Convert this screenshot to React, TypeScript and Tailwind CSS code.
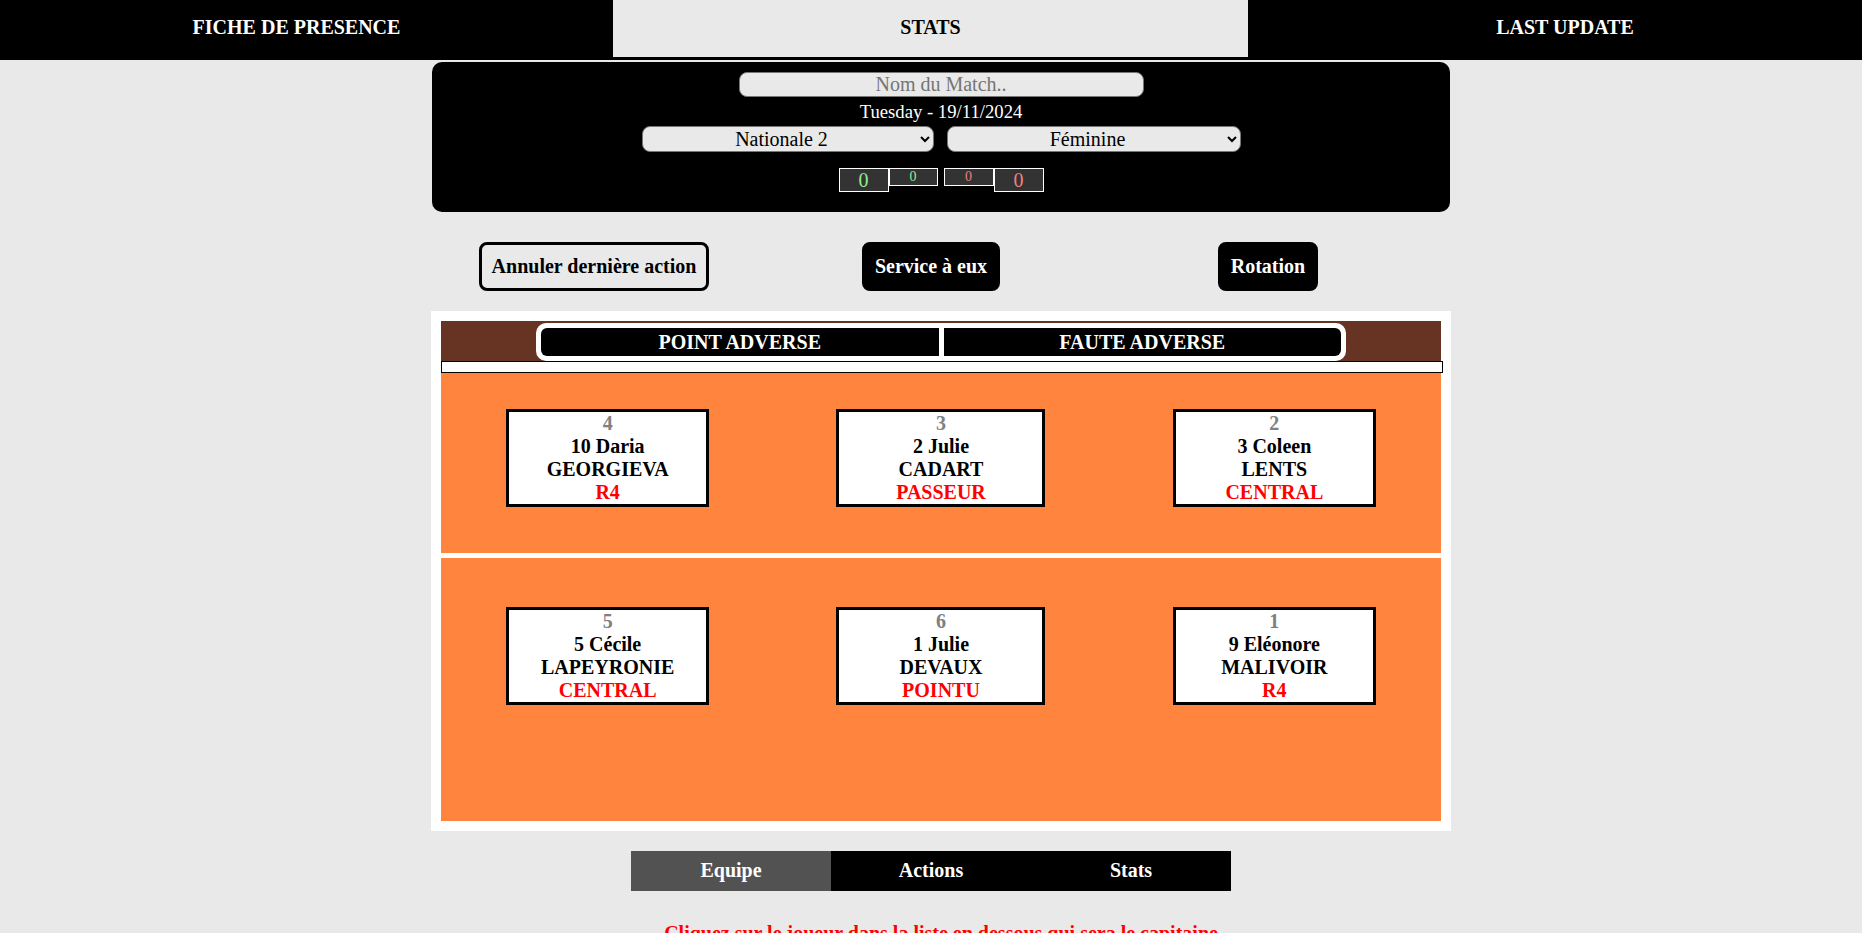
import { useState } from "react"

const front = [
  { pos: "4", name: "10 Daria", last: "GEORGIEVA", role: "R4", w: "w-[203px]" },
  { pos: "3", name: "2 Julie", last: "CADART", role: "PASSEUR", w: "w-[209px]" },
  { pos: "2", name: "3 Coleen", last: "LENTS", role: "CENTRAL", w: "w-[203px]" },
]

const back = [
  { pos: "5", name: "5 Cécile", last: "LAPEYRONIE", role: "CENTRAL", w: "w-[203px]" },
  { pos: "6", name: "1 Julie", last: "DEVAUX", role: "POINTU", w: "w-[209px]" },
  { pos: "1", name: "9 Eléonore", last: "MALIVOIR", role: "R4", w: "w-[203px]" },
]

type Player = (typeof front)[number]

function PlayerCard({ p }: { p: Player }) {
  return (
    <div className={`${p.w} justify-self-center border-[3px] border-black bg-white text-center text-[20px] font-bold leading-[23px]`}>
      <div className="text-[#808080]">{p.pos}</div>
      <div className="text-black">{p.name}</div>
      <div className="text-black">{p.last}</div>
      <div className="text-[#ff0000]">{p.role}</div>
    </div>
  )
}

export default function App() {
  const [tab, setTab] = useState("Equipe")

  return (
    <div className="h-[933px] overflow-hidden bg-[#e9e9e9] font-['Liberation_Serif',serif]">
      {/* Top navigation */}
      <nav className="flex h-[60px] items-start bg-black text-[20px] font-bold leading-[23px]">
        <div className="h-[57px] w-[593px] pt-[16px] text-center text-white">FICHE DE PRESENCE</div>
        <div className="ml-5 h-[57px] w-[635px] bg-[#e9e9e9] pt-[16px] text-center text-black">STATS</div>
        <div className="ml-5 h-[57px] flex-1 pt-[16px] text-center text-white">LAST UPDATE</div>
      </nav>

      <div className="flex flex-col items-center">
        {/* Match panel */}
        <div className="ml-5 mt-[2px] flex w-[1018px] flex-col items-center rounded-[10px] bg-black pb-[20px] pt-[10px]">
          <input
            placeholder="Nom du Match.."
            className="h-[25px] w-[405px] rounded-[8px] border border-[#767676] bg-[#e9e9e9] text-center text-[20px] leading-[23px] text-black outline-none placeholder:text-[#757575]"
          />
          <div className="mt-1 text-[18.7px] leading-[21.5px] text-white">Tuesday - 19/11/2024</div>
          <div className="mt-[3px] flex gap-[13px]">
            <select
              defaultValue="Nationale 2"
              className="h-[26px] w-[292px] rounded-[8px] border border-[#767676] bg-[#e9e9e9] text-center text-[20px] leading-[23px] text-black [text-align-last:center]"
            >
              <option>Nationale 2</option>
              <option>Nationale 3</option>
              <option>Prénationale</option>
            </select>
            <select
              defaultValue="Féminine"
              className="h-[26px] w-[294px] rounded-[8px] border border-[#767676] bg-[#e9e9e9] text-center text-[20px] leading-[23px] text-black [text-align-last:center]"
            >
              <option>Féminine</option>
              <option>Masculine</option>
            </select>
          </div>
          <div className="mt-4 flex items-start leading-none">
            <div className="flex h-[24px] w-[50px] items-center justify-center border border-white bg-[#333333] text-[20px] text-[#90ee90]">0</div>
            <div className="flex h-[18px] w-[49px] items-center justify-center border border-white bg-[#333333] text-[14px] text-[#90ee90]">0</div>
            <div className="ml-[6px] flex h-[18px] w-[50px] items-center justify-center border border-white bg-[#333333] text-[14px] text-[#f08080]">0</div>
            <div className="flex h-[24px] w-[50px] items-center justify-center border border-white bg-[#333333] text-[20px] text-[#f08080]">0</div>
          </div>
        </div>

        {/* Action buttons */}
        <div className="mt-[30px] grid w-[1011px] grid-cols-3 text-[20px] font-bold leading-[23px]">
          <button className="justify-self-center rounded-[8px] border-[3px] border-black p-[10px] text-black">Annuler dernière action</button>
          <button className="justify-self-center rounded-[8px] border-[3px] border-black bg-black p-[10px] text-white">Service à eux</button>
          <button className="justify-self-center rounded-[8px] border-[3px] border-black bg-black p-[10px] text-white">Rotation</button>
        </div>

        {/* Court */}
        <div className="ml-5 mt-5 w-[1020px] bg-white p-[10px]">
          <div className="flex h-[40px] items-end justify-center bg-[#673322]">
            <div className="flex h-[38px] w-[810px] gap-[5px] rounded-[10px] bg-white p-[5px] text-[20px] font-bold leading-[23px] text-white">
              <button className="h-[28px] flex-1 rounded-l-[6px] bg-black pt-[1px]">POINT ADVERSE</button>
              <button className="h-[28px] flex-1 rounded-r-[6px] bg-black pt-[1px]">FAUTE ADVERSE</button>
            </div>
          </div>
          <div className="h-[12px] w-[1002px] border border-black bg-white" />
          <div className="grid h-[180px] grid-cols-3 items-start bg-[#ff843e] pt-[36px]">
            {front.map((p) => (
              <PlayerCard key={p.pos} p={p} />
            ))}
          </div>
          <div className="mt-[5px] grid h-[263px] grid-cols-3 items-start bg-[#ff843e] pt-[49px]">
            {back.map((p) => (
              <PlayerCard key={p.pos} p={p} />
            ))}
          </div>
        </div>

        {/* Bottom tabs */}
        <div className="mt-5 flex h-[40px] w-[600px] text-[20px] font-bold leading-[23px] text-white">
          {["Equipe", "Actions", "Stats"].map((t) => (
            <button
              key={t}
              onClick={() => setTab(t)}
              className={`flex w-[200px] items-center justify-center ${tab === t ? "bg-[#525252]" : "bg-black"}`}
            >
              {t}
            </button>
          ))}
        </div>

        <p className="ml-5 mt-[31px] text-center text-[20px] font-bold leading-[23px] text-[#ff0000]">
          Cliquez sur le joueur dans la liste en dessous qui sera le capitaine
        </p>
      </div>
    </div>
  )
}
